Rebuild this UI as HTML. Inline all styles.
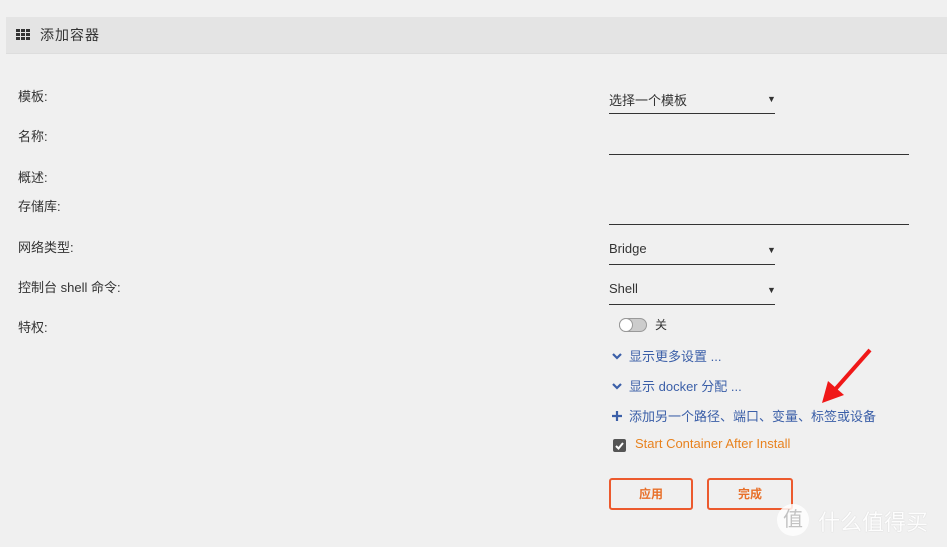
<!DOCTYPE html>
<html><head><meta charset="utf-8"><style>
body{margin:0;width:947px;height:547px;background:#f0f0f0;font-family:"Liberation Sans","Noto Sans CJK SC",sans-serif;font-size:13px;color:#333;position:relative;overflow:hidden}
.a{position:absolute;white-space:nowrap}
.hdr{position:absolute;left:6px;top:17px;width:941px;height:36px;background:#e4e4e4;border-bottom:1px solid #ddd}
.line{position:absolute;height:1px;background:#333}
.blue{color:#3b5fa8}
.tri{font-size:9px}
.btn{position:absolute;top:478px;width:84px;height:32px;border:2px solid #ec5a2e;border-radius:3px;box-sizing:border-box;color:#e8702a;font-weight:bold;text-align:center;line-height:28px;font-size:12px}
</style></head><body>
<div class="hdr"></div>
<svg class="a" style="left:16px;top:29px" width="14" height="11"><g fill="#333"><rect x="0" y="0" width="4" height="3"/><rect x="5" y="0" width="4" height="3"/><rect x="10" y="0" width="4" height="3"/><rect x="0" y="4" width="4" height="3"/><rect x="5" y="4" width="4" height="3"/><rect x="10" y="4" width="4" height="3"/><rect x="0" y="8" width="4" height="3"/><rect x="5" y="8" width="4" height="3"/><rect x="10" y="8" width="4" height="3"/></g></svg>
<div class="a" style="left:40px;top:25px;font-size:14px;letter-spacing:1px">添加容器</div>
<div class="a" style="left:18px;top:86px">模板:</div>
<div class="a" style="left:18px;top:126px">名称:</div>
<div class="a" style="left:18px;top:167px">概述:</div>
<div class="a" style="left:18px;top:196px">存储库:</div>
<div class="a" style="left:18px;top:237px">网络类型:</div>
<div class="a" style="left:18px;top:277px">控制台 shell 命令:</div>
<div class="a" style="left:18px;top:317px">特权:</div>
<div class="a" style="left:609px;top:90px">选择一个模板</div><div class="a tri" style="left:767px;top:94px">▼</div><div class="line" style="left:609px;top:113px;width:166px"></div>
<div class="line" style="left:609px;top:154px;width:300px"></div>
<div class="line" style="left:609px;top:224px;width:300px"></div>
<div class="a" style="left:609px;top:241px">Bridge</div><div class="a tri" style="left:767px;top:245px">▼</div><div class="line" style="left:609px;top:264px;width:166px"></div>
<div class="a" style="left:609px;top:281px">Shell</div><div class="a tri" style="left:767px;top:285px">▼</div><div class="line" style="left:609px;top:304px;width:166px"></div>
<div class="a" style="left:619px;top:318px;width:26px;height:12px;border:1px solid #999;border-radius:7px;background:#ccc"></div>
<div class="a" style="left:619px;top:318px;width:12px;height:12px;border:1px solid #999;border-radius:7px;background:#fff"></div>
<div class="a" style="left:655px;top:316px;font-size:12px">关</div>
<svg class="a" style="left:612px;top:352px" width="10" height="8"><path d="M1 2l4 4 4-4" stroke="#3b5fa8" stroke-width="2.2" fill="none"/></svg>
<div class="a blue" style="left:629px;top:346px">显示更多设置 ...</div>
<svg class="a" style="left:612px;top:382px" width="10" height="8"><path d="M1 2l4 4 4-4" stroke="#3b5fa8" stroke-width="2.2" fill="none"/></svg>
<div class="a blue" style="left:629px;top:376px">显示 docker 分配 ...</div>
<svg class="a" style="left:612px;top:411px" width="10" height="10"><path d="M5 0v10M0 5h10" stroke="#3b5fa8" stroke-width="2.2"/></svg>
<div class="a blue" style="left:629px;top:406px">添加另一个路径、端口、变量、标签或设备</div>
<div class="a" style="left:613px;top:439px;width:13px;height:13px;background:#555;border-radius:2px"></div>
<svg class="a" style="left:614px;top:440px" width="11" height="11"><path d="M2 6l2.5 2.5L9 3" stroke="#fff" stroke-width="2" fill="none"/></svg>
<div class="a" style="left:635px;top:436px;color:#e8821e">Start Container After Install</div>
<svg class="a" style="left:810px;top:345px" width="65" height="60"><path d="M60 5L22 48" stroke="#f01818" stroke-width="4"/><path d="M12 58l6-22 16 14z" fill="#f01818"/></svg>
<div class="btn" style="left:609px">应用</div>
<div class="btn" style="left:707px;width:86px">完成</div>
<div class="a" style="left:777px;top:504px;width:32px;height:32px;border-radius:50%;background:#fff;opacity:.85;color:#bbb;font-size:20px;text-align:center;line-height:32px">值</div>
<div class="a" style="left:818px;top:505px;color:#fff;font-size:22px;opacity:.9;text-shadow:0 0 1px #bbb">什么值得买</div>
</body></html>
